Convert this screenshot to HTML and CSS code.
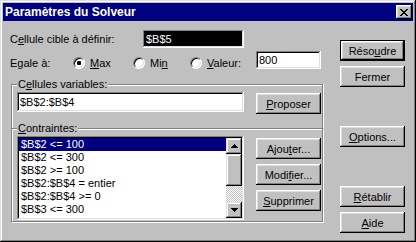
FILE: index.html
```html
<!DOCTYPE html>
<html lang="fr">
<head>
    <meta charset="UTF-8">
    <title>Paramètres du Solveur</title>
    <link rel="stylesheet" href="styles.css">
</head>
<body>
    <div class="dialog">
        <!-- Title bar -->
        <div class="titlebar">
            <span class="title">Paramètres du Solveur</span>
            <span class="close-btn">
                <svg width="8" height="7" viewBox="0 0 8 7" shape-rendering="crispEdges">
                    <rect x="0" y="0" width="2" height="1"/><rect x="6" y="0" width="2" height="1"/>
                    <rect x="1" y="1" width="2" height="1"/><rect x="5" y="1" width="2" height="1"/>
                    <rect x="2" y="2" width="4" height="1"/>
                    <rect x="3" y="3" width="2" height="1"/>
                    <rect x="2" y="4" width="4" height="1"/>
                    <rect x="1" y="5" width="2" height="1"/><rect x="5" y="5" width="2" height="1"/>
                    <rect x="0" y="6" width="2" height="1"/><rect x="6" y="6" width="2" height="1"/>
                </svg>
            </span>
        </div>

        <div class="client">
            <div class="main">
                <div class="row target-row">
                    <span class="target-label">C<u>e</u>llule cible à définir:</span>
                    <div class="field field-selected">$B$5</div>
                </div>

                <div class="row equal-row">
                    <span class="equal-label">Egale à:</span>
                    <span class="radio-item item-max"><span class="radio checked"></span><span><u>M</u>ax</span></span>
                    <span class="radio-item item-min"><span class="radio"></span><span>Mi<u>n</u></span></span>
                    <span class="radio-item item-val"><span class="radio"></span><span><u>V</u>aleur:</span></span>
                    <div class="field field-value">800</div>
                </div>

                <!-- Cellules variables -->
                <div class="group group-vars">
                    <span class="group-title">C<u>e</u>llules variables:</span>
                    <div class="group-body">
                        <div class="field field-cells">$B$2:$B$4</div>
                        <button class="btn btn-propose"><u>P</u>roposer</button>
                    </div>
                </div>

                <!-- Contraintes -->
                <div class="group group-constraints">
                    <span class="group-title"><u>C</u>ontraintes:</span>
                    <div class="group-body">
                        <div class="listbox">
                            <ul class="list-items">
                                <li class="selected">$B$2 &lt;= 100</li>
                                <li>$B$2 &lt;= 300</li>
                                <li>$B$2 &gt;= 100</li>
                                <li>$B$2:$B$4 = entier</li>
                                <li>$B$2:$B$4 &gt;= 0</li>
                                <li>$B$3 &lt;= 300</li>
                            </ul>
                            <div class="scrollbar">
                                <span class="scroll-btn">
                                    <svg width="7" height="4" viewBox="0 0 7 4" shape-rendering="crispEdges">
                                        <rect x="3" y="0" width="1" height="1"/><rect x="2" y="1" width="3" height="1"/>
                                        <rect x="1" y="2" width="5" height="1"/><rect x="0" y="3" width="7" height="1"/>
                                    </svg>
                                </span>
                                <span class="scroll-thumb"></span>
                                <span class="scroll-track"></span>
                                <span class="scroll-btn">
                                    <svg width="7" height="4" viewBox="0 0 7 4" shape-rendering="crispEdges">
                                        <rect x="0" y="0" width="7" height="1"/><rect x="1" y="1" width="5" height="1"/>
                                        <rect x="2" y="2" width="3" height="1"/><rect x="3" y="3" width="1" height="1"/>
                                    </svg>
                                </span>
                            </div>
                        </div>
                        <div class="group-buttons">
                            <button class="btn">Ajou<u>t</u>er...</button>
                            <button class="btn">Modi<u>f</u>ier...</button>
                            <button class="btn btn-delete"><u>S</u>upprimer</button>
                        </div>
                    </div>
                </div>
            </div>

            <!-- Right-hand buttons -->
            <div class="side">
                <button class="btn btn-default">Réso<u>u</u>dre</button>
                <button class="btn btn-close">Fermer</button>
                <button class="btn btn-options"><u>O</u>ptions...</button>
                <button class="btn btn-reset"><u>R</u>établir</button>
                <button class="btn btn-help"><u>A</u>ide</button>
            </div>
        </div>
    </div>
</body>
</html>
```

FILE: styles.css
```css
* {
    margin: 0;
    padding: 0;
    box-sizing: border-box;
}

body {
    background: #c0c0c0;
    font-family: "Liberation Sans", Arial, sans-serif;
    font-size: 11px;
    color: #000;
}

u {
    text-decoration-thickness: 1px;
    text-underline-offset: 1px;
}

/* Window frame */
.dialog {
    width: 416px;
    height: 242px;
    padding: 3px;
    background: #c0c0c0;
    box-shadow: inset -1px -1px #000, inset 1px 1px #dfdfdf, inset -2px -2px #808080, inset 2px 2px #fff;
}

.titlebar {
    height: 18px;
    background: #000080;
    display: flex;
    align-items: center;
    padding-left: 2px;
}

.title {
    flex: 1;
    color: #fff;
    font-weight: bold;
    font-size: 12px;
}

.close-btn {
    width: 16px;
    height: 14px;
    margin-right: 1px;
    display: flex;
    align-items: center;
    justify-content: center;
    background: #c0c0c0;
    box-shadow: inset -1px -1px #000, inset 1px 1px #fff, inset -2px -2px #808080, inset 2px 2px #dfdfdf;
}

/* Client area */
.client {
    display: grid;
    grid-template-columns: 330px 65px;
    padding: 9px 0 0 7px;
}

.row {
    display: flex;
    align-items: center;
    height: 18px;
}

.target-label {
    width: 133px;
}

.equal-row {
    margin-top: 3px;
}

.equal-label {
    width: 63px;
    padding-top: 5px;
}

.radio-item {
    display: flex;
    align-items: center;
    gap: 5px;
    padding-top: 5px;
}

.item-max { width: 60px; }
.item-min { width: 57px; }
.item-val { width: 66px; }

.radio {
    position: relative;
    width: 12px;
    height: 12px;
    border-radius: 50%;
    background: #fff;
    border: 1px solid;
    border-color: #808080 #fff #fff #808080;
    box-shadow: inset 1px 1px #000, inset -1px -1px #dfdfdf;
}

.radio.checked::after {
    content: "";
    position: absolute;
    left: 3px;
    top: 3px;
    width: 4px;
    height: 4px;
    border-radius: 1px;
    background: #000;
}

/* Sunken edit fields */
.field {
    height: 18px;
    padding: 2px 3px;
    line-height: 14px;
    background: #fff;
    box-shadow: inset -1px -1px #fff, inset 1px 1px #808080, inset -2px -2px #dfdfdf, inset 2px 2px #000;
}

.field-selected {
    width: 101px;
    background: #000;
    color: #fff;
}

.field-value {
    width: 65px;
}

.field-cells {
    width: 227px;
    height: 20px;
    line-height: 16px;
}

/* Group boxes */
.group {
    margin-left: 1px;
    width: 312px;
    border: 1px solid #808080;
}

.group-vars {
    margin-top: 15px;
    height: 44px;
    border-bottom: none;
    box-shadow: inset 1px 1px #fff, 1px 0 #fff;
}

.group-constraints {
    height: 94px;
    box-shadow: inset 1px 1px #fff, 1px 1px #fff;
}

.group-title {
    display: table;
    margin: -7px 0 0 5px;
    padding: 0 1px;
    line-height: 13px;
    background: #c0c0c0;
}

.group-body {
    display: flex;
    align-items: flex-start;
    margin-top: 1px;
    padding-left: 5px;
}

/* Buttons */
.btn {
    display: block;
    width: 65px;
    height: 21px;
    border: none;
    background: #c0c0c0;
    font: inherit;
    color: #000;
    text-align: center;
    box-shadow: inset -1px -1px #000, inset 1px 1px #fff, inset -2px -2px #808080, inset 2px 2px #dfdfdf;
}

.btn-propose {
    margin: 1px 0 0 12px;
}

.group-buttons {
    margin: 2px 0 0 12px;
}

.group-buttons .btn + .btn {
    margin-top: 5px;
}

.group-buttons .btn-delete {
    margin-top: 6px;
}

.side .btn-default {
    margin-top: 10px;
    border: 1px solid #000;
}

.btn-close { margin-top: 5px; }
.btn-options { margin-top: 39px; }
.btn-reset { margin-top: 39px; }
.btn-help { margin-top: 5px; }

/* List box */
.listbox {
    display: flex;
    width: 227px;
    height: 84px;
    padding: 2px;
    background: #fff;
    box-shadow: inset -1px -1px #fff, inset 1px 1px #808080, inset -2px -2px #dfdfdf, inset 2px 2px #000;
}

.list-items {
    flex: 1;
    list-style: none;
}

.list-items li {
    height: 13px;
    line-height: 13px;
    padding-left: 2px;
    white-space: nowrap;
}

.list-items li.selected {
    background: #000080;
    color: #fff;
}

.scrollbar {
    width: 16px;
    display: flex;
    flex-direction: column;
}

.scroll-btn,
.scroll-thumb {
    display: flex;
    align-items: center;
    justify-content: center;
    background: #c0c0c0;
    box-shadow: inset -1px -1px #000, inset 1px 1px #dfdfdf, inset -2px -2px #808080, inset 2px 2px #fff;
}

.scroll-btn {
    height: 16px;
}

.scroll-thumb {
    height: 32px;
}

.scroll-track {
    height: 16px;
    background: repeating-conic-gradient(#fff 0 25%, #c0c0c0 0 50%) 0 0 / 2px 2px;
}
```
